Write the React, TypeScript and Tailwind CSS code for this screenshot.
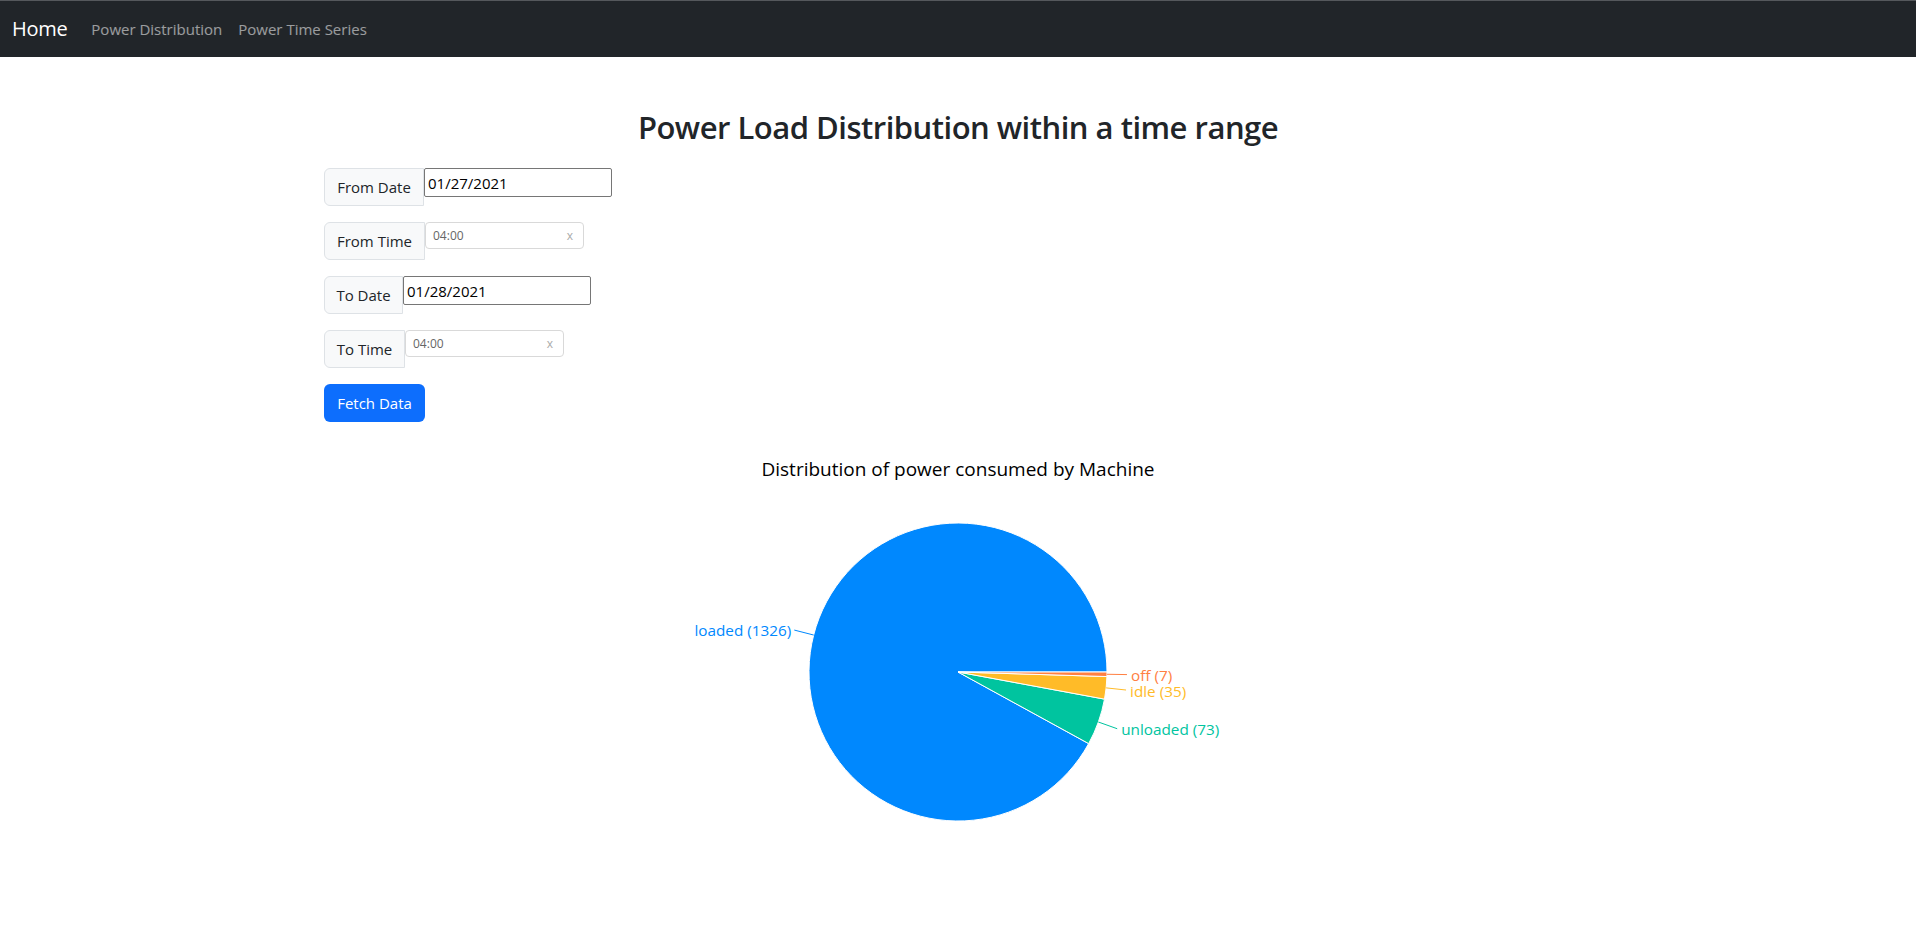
const slices = [
  { name: "loaded", value: 1326, color: "#0088FE" },
  { name: "unloaded", value: 73, color: "#00C49F" },
  { name: "idle", value: 35, color: "#FFBB28" },
  { name: "off", value: 7, color: "#FF8042" },
];

const CX = 300;
const CY = 189;
const R = 149;

function pt(r: number, deg: number) {
  const a = (deg * Math.PI) / 180;
  return { x: CX + r * Math.cos(a), y: CY - r * Math.sin(a) };
}

function PieChart() {
  const total = slices.reduce((s, d) => s + d.value, 0);
  let start = 0;
  const parts = slices.map((d) => {
    const sweep = (d.value / total) * 360;
    const end = start + sweep;
    const mid = start + sweep / 2;
    const p0 = pt(R, start);
    const p1 = pt(R, end);
    const large = sweep > 180 ? 1 : 0;
    const path = `M${CX},${CY} L${p0.x},${p0.y} A${R},${R} 0 ${large} 0 ${p1.x},${p1.y} Z`;
    start = end;
    return { ...d, path, mid };
  });

  return (
    <svg width={600} height={380} className="block">
      {parts.map((p) => (
        <path key={p.name} d={p.path} fill={p.color} stroke="#fff" strokeWidth={1} />
      ))}
      {parts.map((p) => {
        const a = pt(R, p.mid);
        const b = pt(R + 20, p.mid);
        const right = b.x >= CX;
        return (
          <g key={p.name + "-label"}>
            <path d={`M${a.x},${a.y} L${b.x},${b.y}`} stroke={p.color} fill="none" />
            <text
              x={b.x + (right ? 4 : -3)}
              y={b.y + (p.name === "idle" ? 1 : 0)}
              fill={p.color}
              textAnchor={right ? "start" : "end"}
              dominantBaseline="central"
              fontSize={15.3}
              fontFamily="'Open Sans', sans-serif"
            >
              {p.name} ({p.value})
            </text>
          </g>
        );
      })}
    </svg>
  );
}

function DateRow({ label, width, value, inputWidth }: { label: string; width: string; value: string; inputWidth: string }) {
  return (
    <div className="flex items-start mb-4">
      <span className={`${width} h-[38px] flex items-center justify-center rounded-l-md border border-[#dee2e6] bg-[#f8f9fa] text-[15px] text-[#212529]`}>
        {label}
      </span>
      <input
        readOnly
        value={value}
        className={`${inputWidth} h-[29px] border border-[#767676] rounded-[2px] px-[3px] text-[15px] text-black outline-none`}
      />
    </div>
  );
}

function TimeRow({ label, width }: { label: string; width: string }) {
  return (
    <div className="flex items-start mb-4">
      <span className={`${width} h-[38px] flex items-center justify-center rounded-l-md border border-[#dee2e6] bg-[#f8f9fa] text-[15px] text-[#212529]`}>
        {label}
      </span>
      <div className="w-[159px] h-[27px] flex items-center justify-between rounded border border-[#d9d9d9] px-[7px] text-[12px] text-[#666]">
        <span>04:00</span>
        <span className="text-[#aaa] pr-[3px]">x</span>
      </div>
    </div>
  );
}

export default function App() {
  return (
    <div className="min-h-screen bg-white font-['Open_Sans',sans-serif] text-[#212529]">
      {/* navbar */}
      <nav className="h-[57px] bg-[#212529] border-t border-[#55585c] flex items-center px-3">
        <span className="text-[20px] text-white mr-4 tracking-[-0.3px]">Home</span>
        <a className="px-2 text-[15px] text-white/55">Power Distribution</a>
        <a className="px-2 text-[15px] text-white/55">Power Time Series</a>
      </nav>

      <main>
        <h2 className="mt-[51px] mb-[22px] text-center text-[31px] leading-[38px] font-semibold tracking-[-0.5px]">
          Power Load Distribution within a time range
        </h2>

        <div className="ml-[324px]">
          <DateRow label="From Date" width="w-[100px]" value="01/27/2021" inputWidth="w-[188px]" />
          <TimeRow label="From Time" width="w-[101px]" />
          <DateRow label="To Date" width="w-[79px]" value="01/28/2021" inputWidth="w-[188px]" />
          <TimeRow label="To Time" width="w-[81px]" />

          <button className="w-[101px] h-[38px] rounded-md bg-[#0d6efd] text-white text-[15px]">
            Fetch Data
          </button>
        </div>

        <div className="mt-[34px] text-center text-[19px] leading-[27px] text-black">
          Distribution of power consumed by Machine
        </div>
        <div className="flex justify-center">
          <PieChart />
        </div>
      </main>
    </div>
  );
}
